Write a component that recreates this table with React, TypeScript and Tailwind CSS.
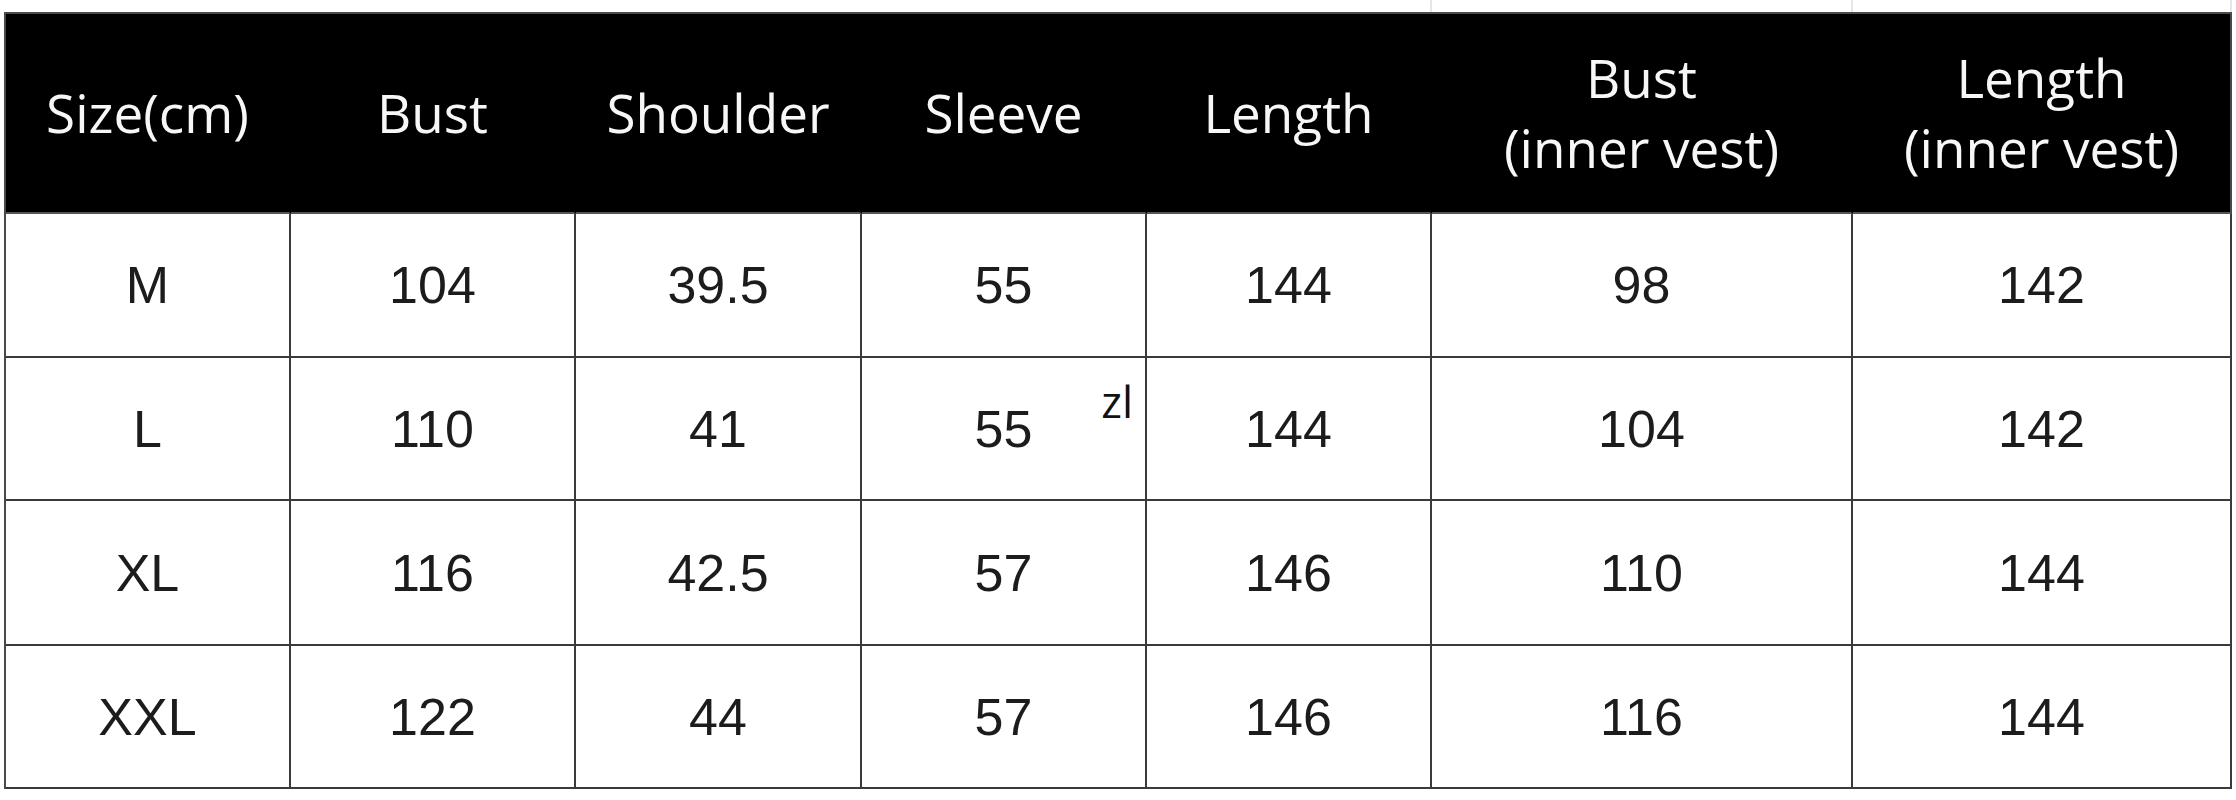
import React from 'react';

type Row = { size: string; values: string[] };

const headers: string[][] = [
  ['Size(cm)'],
  ['Bust'],
  ['Shoulder'],
  ['Sleeve'],
  ['Length'],
  ['Bust', '(inner vest)'],
  ['Length', '(inner vest)'],
];

const rows: Row[] = [
  { size: 'M', values: ['104', '39.5', '55', '144', '98', '142'] },
  { size: 'L', values: ['110', '41', '55', '144', '104', '142'] },
  { size: 'XL', values: ['116', '42.5', '57', '146', '110', '144'] },
  { size: 'XXL', values: ['122', '44', '57', '146', '116', '144'] },
];

const rowHeights = ['h-[144px]', 'h-[143px]', 'h-[145px]', 'h-[143px]'];

const App: React.FC = () => {
  return (
    <div className="w-[2236px] h-[800px] bg-white overflow-hidden">
      {/* faint spreadsheet gridlines above the table */}
      <div className="h-[12px] grid grid-cols-[2px_285px_285px_286px_285px_285px_421px_379px] ml-[4px]">
        <div />
        <div />
        <div />
        <div />
        <div />
        <div className="border-r-2 border-[#e6e6e6]" />
        <div className="border-r-2 border-[#e6e6e6]" />
        <div className="border-r-2 border-[#e6e6e6]" />
      </div>

      <div className="ml-[4px] w-[2228px] border-l-2 border-t-2 border-[#4a4a4a]">
        <div className="grid grid-cols-[285px_285px_286px_285px_285px_421px_379px]">
          {headers.map((lines, i) => (
            <div
              key={i}
              className={`h-[200px] bg-black border-b-2 border-b-[#555555] flex flex-col items-center justify-center text-[#f7f7f7] text-[53px] leading-[70px] font-['Open_Sans',sans-serif] ${
                i === headers.length - 1 ? 'border-r-2 border-r-[#4a4a4a]' : 'border-r-2 border-r-black'
              }`}
            >
              {lines.map((l, j) => (
                <span key={j} className="whitespace-nowrap">
                  {l}
                </span>
              ))}
            </div>
          ))}

          {rows.map((row, r) =>
            [row.size, ...row.values].map((v, c) => (
              <div
                key={`${r}-${c}`}
                className={`relative ${rowHeights[r]} border-r-2 border-b-2 border-[#3a3a3a] flex items-center justify-center text-[#1c1c1c] text-[52px] font-['Liberation_Sans',Arial,sans-serif]`}
              >
                {v}
                {r === 1 && c === 3 && (
                  <span className="absolute right-[12px] top-[21px] text-[44px] leading-[44px] text-[#111] font-['Open_Sans',sans-serif]">
                    zl
                  </span>
                )}
              </div>
            ))
          )}
        </div>
      </div>
    </div>
  );
};

export default App;
